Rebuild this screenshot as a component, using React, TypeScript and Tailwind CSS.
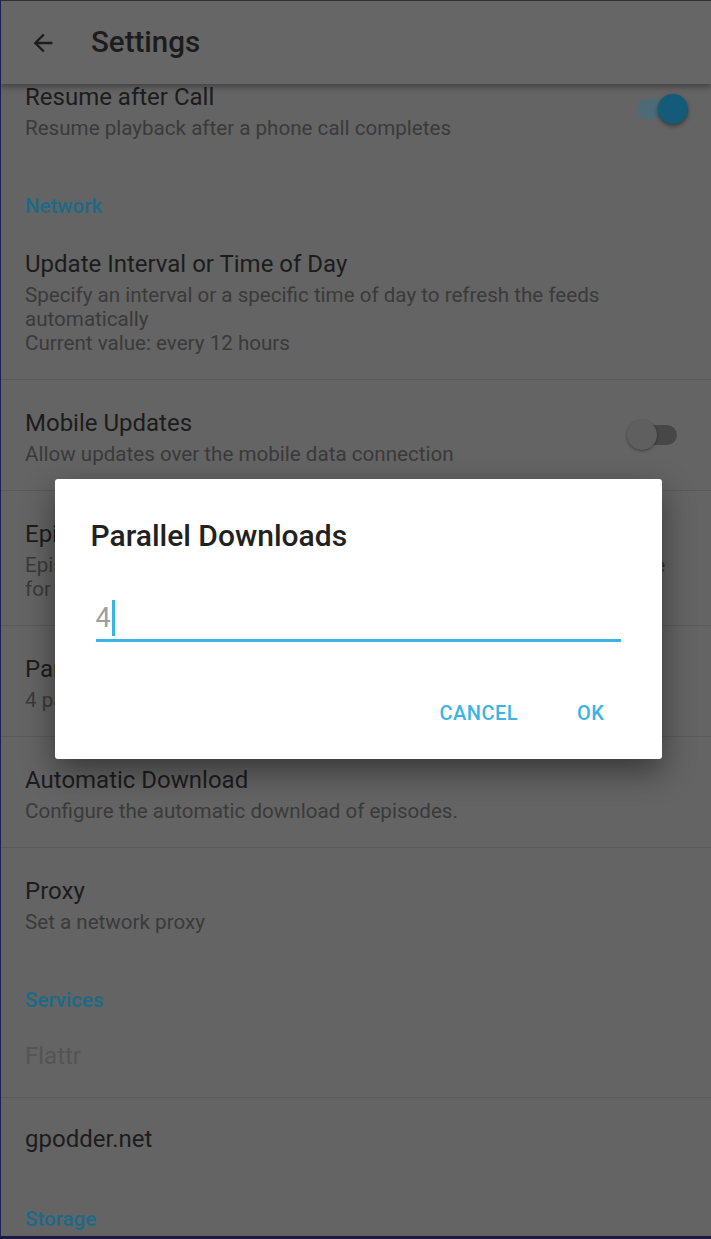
import React from 'react';

type Row = {
  title: string;
  lines?: string[];
  toggle?: 'on' | 'off';
  disabled?: boolean;
  divider?: boolean;
};

const Toggle: React.FC<{ on: boolean }> = ({ on }) => {
  if (on) {
    return (
      <div className="relative mr-[-1px] h-[30px] w-[52px] shrink-0">
        <div className="absolute left-[1px] top-[5px] h-[20px] w-[42px] rounded-full bg-[#4d6a77]" />
        <div className="absolute right-0 top-0 h-[30px] w-[30px] rounded-full bg-[#145a79] shadow-[0_2px_4px_rgba(0,0,0,0.45)]" />
      </div>
    );
  }
  return (
    <div className="relative mr-[9px] h-[30px] w-[52px] shrink-0">
      <div className="absolute right-[1px] top-[5px] h-[20px] w-[42px] rounded-full bg-[#474747]" />
      <div className="absolute left-[1px] top-0 h-[30px] w-[30px] rounded-full bg-[#5f5f5f] shadow-[0_1px_3px_rgba(0,0,0,0.4)]" />
    </div>
  );
};

const PrefRow: React.FC<{ row: Row }> = ({ row }) => {
  const single = !row.lines;
  return (
    <div className={row.divider ? 'border-b border-[#5a5a5a]' : ''}>
      <div className={`flex items-center pl-6 pr-6 ${single ? 'min-h-[82px]' : 'py-6'}`}>
        <div className="min-w-0 flex-1">
          <div
            className={`text-[24px] leading-[38px] ${
              row.disabled ? 'text-[#545454]' : 'text-[#1c1c1c]'
            }`}
          >
            {row.title}
          </div>
          {row.lines?.map((l) => (
            <div key={l} className="whitespace-nowrap text-[20.6px] leading-[24px] text-[#3a3a3a]">
              {l}
            </div>
          ))}
        </div>
        {row.toggle && <Toggle on={row.toggle === 'on'} />}
      </div>
    </div>
  );
};

const Category: React.FC<{ label: string; last?: boolean }> = ({ label, last }) => (
  <div
    className={`pb-[3px] pl-6 text-[20.5px] font-medium leading-[24px] text-[#1b6a88] ${
      last ? 'pt-[27px]' : 'pt-[30px]'
    }`}
  >
    {label}
  </div>
);

export default function App() {
  return (
    <div className="relative h-[1239px] w-[711px] overflow-hidden border-b-[3px] border-l border-t border-b-[#1a1a3e] border-l-[#1f2050] border-t-[#2e2e2e] bg-[#646464] font-['Roboto',sans-serif]">
      {/* toolbar */}
      <header className="relative z-10 flex h-[83px] items-center bg-[#666666] shadow-[0_3px_6px_rgba(0,0,0,0.35)]">
        <svg className="ml-[28px] h-[28px] w-[28px] text-[#1c1c1c]" viewBox="0 0 24 24" fill="currentColor">
          <path d="M20 11H7.83l5.59-5.59L12 4l-8 8 8 8 1.41-1.41L7.83 13H20v-2z" />
        </svg>
        <h1 className="ml-[34px] text-[29.5px] font-medium text-[#1c1c1c]">Settings</h1>
      </header>

      <div className="mt-[-30px]">
        <PrefRow
          row={{ title: 'Resume after Call', lines: ['Resume playback after a phone call completes'], toggle: 'on' }}
        />
        <Category label="Network" />
        <PrefRow
          row={{
            title: 'Update Interval or Time of Day',
            lines: [
              'Specify an interval or a specific time of day to refresh the feeds',
              'automatically',
              'Current value: every 12 hours',
            ],
            divider: true,
          }}
        />
        <PrefRow
          row={{
            title: 'Mobile Updates',
            lines: ['Allow updates over the mobile data connection'],
            toggle: 'off',
            divider: true,
          }}
        />
        <PrefRow
          row={{
            title: 'Episode Cleanup',
            lines: [
              "Episodes that aren't in the queue and aren't favorites should be eligible",
              'for removal if Automatic Download needs space for new episodes',
            ],
            divider: true,
          }}
        />
        <PrefRow row={{ title: 'Parallel Downloads', lines: ['4 parallel downloads'], divider: true }} />
        <PrefRow
          row={{ title: 'Automatic Download', lines: ['Configure the automatic download of episodes.'], divider: true }}
        />
        <PrefRow row={{ title: 'Proxy', lines: ['Set a network proxy'] }} />
        <Category label="Services" />
        <PrefRow row={{ title: 'Flattr', disabled: true, divider: true }} />
        <PrefRow row={{ title: 'gpodder.net' }} />
        <Category label="Storage" last />
      </div>

      {/* dialog */}
      <div className="absolute inset-0 z-20 flex items-center justify-center pl-[4px]">
        <div className="w-[607px] rounded-[3px] bg-white pb-[22px] shadow-[0_12px_32px_rgba(0,0,0,0.45)]">
          <h2 className="pl-[36px] pt-[40px] text-[30px] font-medium leading-[34px] text-[#212121]">
            Parallel Downloads
          </h2>
          <div className="mx-[41px] mt-[47px] flex items-center border-b-[3px] border-[#3ab4e5] pb-[3px]">
            <span className="text-[27px] leading-[36px] text-[#9e9e9e]">4</span>
            <span className="ml-[1px] h-[36px] w-[3px] bg-[#3ab4e5]" />
          </div>
          <div className="mt-[47px] flex justify-end gap-[27px] pr-[41px]">
            <button className="h-[48px] px-4 text-[20px] font-medium tracking-[0.5px] text-[#3ab4e5]">CANCEL</button>
            <button className="h-[48px] px-4 text-[20px] font-medium tracking-[0.5px] text-[#3ab4e5]">OK</button>
          </div>
        </div>
      </div>
    </div>
  );
}
